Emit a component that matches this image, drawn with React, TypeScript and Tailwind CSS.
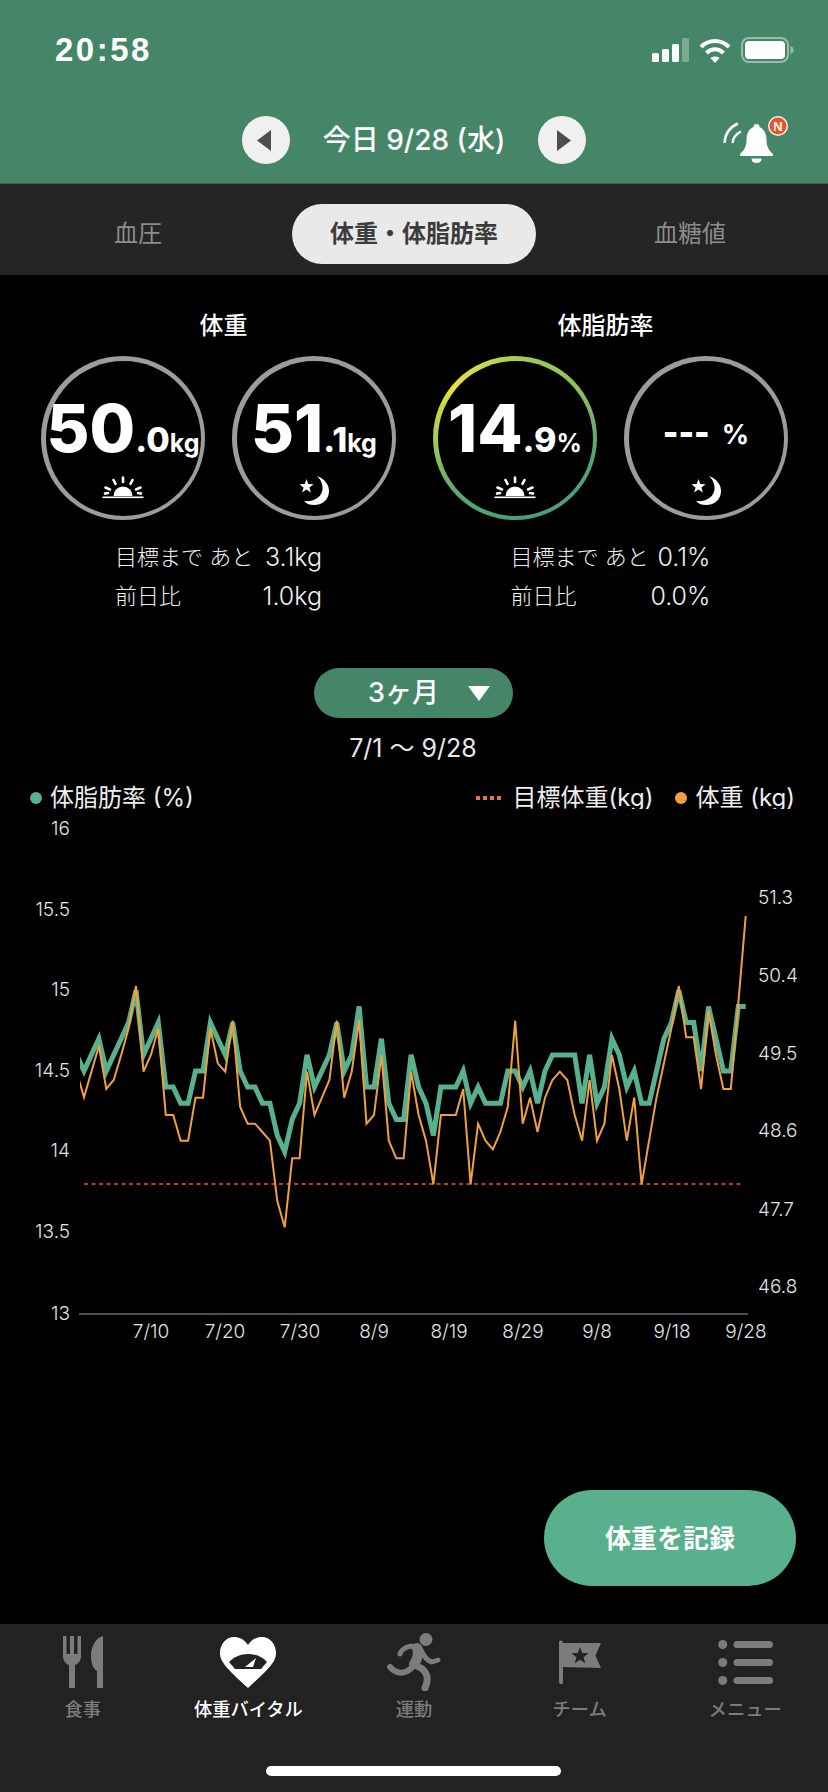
import React from "react";

const fat = [14.6,14.5,14.6,14.7,14.5,14.6,14.7,14.8,15.0,14.6,14.7,14.8,14.4,14.4,14.3,14.3,14.5,14.5,14.8,14.7,14.6,14.8,14.5,14.4,14.4,14.3,14.3,14.1,14.0,14.2,14.3,14.6,14.4,14.5,14.6,14.8,14.5,14.6,14.9,14.4,14.4,14.7,14.3,14.2,14.2,14.6,14.4,14.3,14.1,14.4,14.4,14.4,14.5,14.3,14.4,14.3,14.3,14.3,14.5,14.5,14.4,14.5,14.3,14.5,14.6,14.6,14.6,14.6,14.3,14.6,14.3,14.4,14.7,14.6,14.4,14.5,14.3,14.3,14.5,14.7,14.8,15.0,14.8,14.8,14.5,14.9,14.7,14.5,14.5,14.9,14.9];
const wz = [515,592,515,438,567,540,465,385,258,515,465,385,645,645,722,722,593,593,385,490,515,362,620,671,671,696,722,903,982,775,775,515,645,593,540,362,593,515,362,671,645,465,722,775,775,515,645,722,853,645,645,645,567,853,671,722,748,696,620,362,671,593,696,593,540,515,540,645,722,540,722,671,465,567,722,593,853,722,593,490,385,258,412,412,567,332,465,567,567,310,48];
const X = (i: number) => 84 + 7.435 * (i - 1);
const fatPts = fat.map((v, i) => `${X(i).toFixed(1)},${(1071 - (v - 14.5) * 161.3).toFixed(1)}`).join(" ");
const wPts = wz.map((z, i) => `${X(i).toFixed(1)},${(900 + z / 3).toFixed(1)}`).join(" ");

const leftTicks: [string, number][] = [["16",828],["15.5",909],["15",989],["14.5",1070],["14",1150],["13.5",1231],["13",1313]];
const rightTicks: [string, number][] = [["51.3",897],["50.4",975],["49.5",1053],["48.6",1130],["47.7",1209],["46.8",1286]];
const dates: [string, number][] = [["7/10",151],["7/20",225],["7/30",300],["8/9",374],["8/19",449],["8/29",523],["9/8",597],["9/18",672],["9/28",746]];

const FONT = "font-['Inter','Noto_Sans_CJK_JP',sans-serif]";

function Sun() {
  return (
    <svg width="42" height="24" viewBox="0 0 42 24" fill="white" className="mb-[6px]">
      <path d="M11.500 20a9.500 9.500 0 0 1 19 0z" />
      <rect x="0.500" y="20.500" width="41" height="1.600" />
      <g stroke="white" strokeWidth="2.600" strokeLinecap="round">
        <path d="M21 1.500v4.500M11.500 4l2 3.800M30.500 4l-2 3.800M3.500 11.500l4.500 2M38.500 11.500l-4.500 2M3 17.600l3-.6M39 17.600l-3-.6" />
      </g>
    </svg>
  );
}

function Moon() {
  return (
    <svg width="30" height="30" viewBox="0 0 30 30" fill="white">
      <path d="M18 0C26 3 30 9 30 15C30 23 24 29 15 29C11 29 8 28 5 25C14 26 22 22 23.500 14C24 8 22 4 18 0z" />
      <polygon points="7.500,3 9.300,8.100 14.600,8.200 10.400,11.400 11.900,16.600 7.500,13.500 3.100,16.600 4.600,11.400 0.400,8.200 5.700,8.100" />
    </svg>
  );
}

function Ring({ children, icon, gradient }: { children: React.ReactNode; icon: React.ReactNode; gradient?: boolean }) {
  return (
    <div className={`relative w-[164px] h-[164px] rounded-full shrink-0 ${gradient ? "bg-[conic-gradient(from_0deg,#a5cd52_0deg,#8fc25f_50deg,#52a276_105deg,#44a07c_180deg,#5fa96e_230deg,#a6cc52_270deg,#e6e23c_310deg,#c4d84a_340deg,#a5cd52_360deg)]" : "bg-[#9a9d9d]"}`}>
      <div className="absolute inset-[4.5px] rounded-full bg-black">
        <div className="absolute inset-x-0 top-[40px] h-[60px] flex items-end justify-center text-white whitespace-nowrap">
          {children}
        </div>
        <div className="absolute inset-x-0 bottom-[9.500px] h-[32px] flex items-end justify-center">{icon}</div>
      </div>
    </div>
  );
}

function Value({ a, b, u }: { a: string; b: string; u: string }) {
  return (
    <span className="font-['Inter',sans-serif] font-extrabold leading-none flex items-baseline">
      <span className="text-[66px] leading-none">{a}</span>
      <span className="text-[34px] leading-none">.{b}</span>
      <span className="text-[25px] leading-none font-bold">{u}</span>
    </span>
  );
}

function Stat({ rows, className }: { rows: [string, string][]; className: string }) {
  return (
    <div className={`flex flex-col gap-[9px] text-[#f0f0f0] text-[22px] font-light leading-[30px] ${className}`}>
      {rows.map(([l, v]) => (
        <div key={l} className="flex justify-between whitespace-nowrap">
          <span>{l}</span>
          <span className="text-[25px]">{v}</span>
        </div>
      ))}
    </div>
  );
}

function NavItem({ label, active, children }: { label: string; active?: boolean; children: React.ReactNode }) {
  return (
    <div className="w-[165.600px] flex flex-col items-center">
      <div className="h-[73px] pt-[3px] flex items-center justify-center">{children}</div>
      <div className={`text-[18.300px] leading-[24px] font-medium whitespace-nowrap ${active ? "text-white" : "text-[#7c7c7c]"}`}>{label}</div>
    </div>
  );
}

export default function App() {
  return (
    <div className={`w-[828px] h-[1792px] bg-black overflow-hidden flex flex-col ${FONT}`}>
      <header className="h-[184px] bg-[#448667] flex flex-col border-b border-[#555]">
        <div className="h-[100px] flex items-start justify-between pl-[55px] pr-[34px] pt-[30px]">
          <span className="text-white text-[33px] leading-[40px] font-bold font-['Liberation_Sans',sans-serif] tracking-[2.500px]">20:58</span>
          <div className="flex items-center gap-[10px] pt-[7px]">
            <svg width="37" height="24" viewBox="0 0 37 24" fill="white">
              <rect x="0" y="15" width="7" height="9" rx="1.500" />
              <rect x="10" y="11" width="7" height="13" rx="1.500" />
              <rect x="20" y="6" width="7" height="18" rx="1.500" />
              <rect x="30" y="0" width="7" height="24" rx="1.500" fillOpacity="0.3" />
            </svg>
            <svg width="32" height="25" viewBox="0 0 32 25" fill="none" stroke="white" strokeWidth="4">
              <path d="M2 9C10 1 22 1 30 9" />
              <path d="M7.500 15c5-5 12-5 17 0" />
              <path d="M16 25l-4.500-5c2.500-2 6.500-2 9 0z" fill="white" stroke="none" />
            </svg>
            <svg width="53" height="26" viewBox="0 0 53 26" fill="white">
              <rect x="1" y="1" width="46" height="24" rx="7" fill="none" stroke="white" strokeOpacity="0.45" strokeWidth="2" />
              <rect x="4" y="4" width="40" height="18" rx="4" />
              <path d="M49.500 9c2 .5 3 2.200 3 4s-1 3.500-3 4z" fillOpacity="0.45" />
            </svg>
          </div>
        </div>
        <div className="relative h-[48px] mt-[16px] flex items-center justify-center">
          <div className="w-[344px] flex items-center justify-between">
            <div className="w-[48px] h-[48px] rounded-full bg-[#f0f0f0] flex items-center justify-center pr-[4px]">
              <svg width="14" height="21" viewBox="0 0 14 21" fill="#4d4d4d"><path d="M14 0v21L0 10.500z" /></svg>
            </div>
            <span className="text-white text-[28px] font-medium leading-[32px] whitespace-nowrap">今日 9/28 (水)</span>
            <div className="w-[48px] h-[48px] rounded-full bg-[#f0f0f0] flex items-center justify-center pl-[4px]">
              <svg width="14" height="21" viewBox="0 0 14 21" fill="#4d4d4d"><path d="M0 0v21l14-10.500z" /></svg>
            </div>
          </div>
          <svg className="absolute left-[720px] top-[-2px]" width="72" height="52" viewBox="0 0 72 52">
            <path d="M18 9.500C10 13 5 20 4.500 29" fill="none" stroke="white" strokeWidth="2.500" />
            <path d="M21 17.500C16 20 13 24 12.500 29" fill="none" stroke="white" strokeWidth="2.500" />
            <path d="M36.500 10c2 0 3 1 3 3c5 2 7 7 7 13c0 6 2 10 6.500 14v2H20v-2c4.500-4 6.500-8 6.500-14c0-6 2-11 7-13c0-2 1-3 3-3z" fill="white" />
            <path d="M31.500 44.500h10c0 3-2 4.500-5 4.500s-5-1.500-5-4.500z" fill="white" />
            <circle cx="58" cy="12" r="10" fill="#f0f0f0" />
            <circle cx="58" cy="12" r="8.500" fill="#ee5024" />
            <text x="58" y="17" textAnchor="middle" fontSize="13" fontWeight="700" fill="white" fontFamily="Liberation Sans">N</text>
          </svg>
        </div>
      </header>

      <div className="h-[91px] bg-[#252525] flex items-start pt-[20px] text-[24px] leading-[60px]">
        <div className="w-[276px] text-center text-[#8c8c8c]">血圧</div>
        <div className="ml-[16px] w-[244px] h-[60px] rounded-[30px] bg-[#e9e9e9] text-[#3c3c3c] text-center font-bold">体重・体脂肪率</div>
        <div className="ml-[16px] w-[276px] text-center text-[#8c8c8c]">血糖値</div>
      </div>

      <section className="flex pt-[35px] pl-[41px]">
        <div className="w-[355px] flex flex-col items-center">
          <div className="text-white text-[24px] font-medium leading-[32px] ml-[10px]">体重</div>
          <div className="mt-[14px] w-full flex justify-between">
            <Ring icon={<Sun />}><Value a="50" b="0" u="kg" /></Ring>
            <Ring icon={<Moon />}><Value a="51" b="1" u="kg" /></Ring>
          </div>
          <Stat className="mt-[22px] w-[207px]" rows={[["目標まで あと", "3.1kg"], ["前日比", "1.0kg"]]} />
        </div>
        <div className="ml-[37px] w-[355px] flex flex-col items-center">
          <div className="text-white text-[24px] font-medium leading-[32px] mr-[10px]">体脂肪率</div>
          <div className="mt-[14px] w-full flex justify-between">
            <Ring gradient icon={<Sun />}><Value a="14" b="9" u="%" /></Ring>
            <Ring icon={<Moon />}>
              <span className="font-['Inter',sans-serif] font-bold leading-none pb-[12px] whitespace-nowrap flex items-baseline">
                <span className="text-[33px] font-black">---</span>
                <span className="ml-[12px] text-[27px]">%</span>
              </span>
            </Ring>
          </div>
          <Stat className="mt-[22px] w-[200px]" rows={[["目標まで あと", "0.1%"], ["前日比", "0.0%"]]} />
        </div>
      </section>

      <div className="mt-[57px] ml-[314px] w-[199px] h-[50px] rounded-[25px] bg-[#448667] flex items-center pl-[54px] gap-[29px] text-white text-[27px] font-medium">
        <span className="whitespace-nowrap">3ヶ月</span>
        <svg width="22" height="15" viewBox="0 0 22 15" fill="white"><path d="M0 0h22L11 15z" /></svg>
      </div>
      <div className="mt-[15px] text-center text-[#e8e8e8] text-[25px] leading-[30px] ml-[-2px]">7/1 〜 9/28</div>

      <div className="mt-[20px] flex items-start justify-between pl-[30px] pr-[33px] text-[#eeeeee] text-[24px] leading-[30px] h-[26px] overflow-hidden">
        <div className="flex items-start gap-[8px]">
          <span className="mt-[9px] w-[12px] h-[12px] rounded-full bg-[#58b08c]" />
          <span>体脂肪率 (%)</span>
        </div>
        <div className="flex items-start">
          <span className="flex gap-[3px] mr-[12px] mt-[13px]">
            <i className="w-[4px] h-[4px] bg-[#e8705a]" /><i className="w-[4px] h-[4px] bg-[#e8705a]" /><i className="w-[4px] h-[4px] bg-[#e8705a]" /><i className="w-[4px] h-[4px] bg-[#e8705a]" />
          </span>
          <span>目標体重(kg)</span>
          <span className="ml-[22px] mt-[9px] w-[12px] h-[12px] rounded-full bg-[#f0a040]" />
          <span className="ml-[8px]">体重 (kg)</span>
        </div>
      </div>

      <div className="relative flex-1">
        <svg className="absolute left-0 top-[-1px]" width="828" height="560" viewBox="0 808 828 560">
          <defs><clipPath id="plot"><rect x="80" y="808" width="680" height="520" /></clipPath></defs>
          <line x1="79" x2="748" y1="1314" y2="1314" stroke="#4f4f4f" strokeWidth="2" />
          <line x1="84" x2="744" y1="1184" y2="1184" stroke="#c23a1e" strokeWidth="2" strokeDasharray="4 3.500" />
          <g clipPath="url(#plot)" fill="none" strokeLinejoin="miter">
            <polyline points={fatPts} stroke="#58b08c" strokeWidth="5" />
            <polyline points={wPts} stroke="#f0a040" strokeWidth="2" />
          </g>
          <g fontFamily="Inter, sans-serif" fontSize="19" fontWeight="300" fill="#e4e4e4">
            {leftTicks.map(([t, y]) => (
              <text key={t} x="70" y={y + 7} textAnchor="end">{t}</text>
            ))}
            {rightTicks.map(([t, y]) => (
              <text key={t} x="758" y={y + 7}>{t}</text>
            ))}
            {dates.map(([t, x]) => (
              <text key={t} x={x} y="1338" textAnchor="middle">{t}</text>
            ))}
          </g>
        </svg>
        <div className="absolute right-[32px] top-[681px] w-[252px] h-[96px] rounded-[48px] bg-[#58b08c] flex items-center justify-center text-white text-[26px] font-bold">体重を記録</div>
      </div>

      <nav className="h-[168px] bg-[#222222] relative flex shrink-0">
        <NavItem label="食事">
          <svg width="40" height="52" viewBox="0 0 40 52" fill="#7c7c7c">
            <path d="M0 0h3.500v18h3.500V0h4v18h3.500V0H18v20c0 5-3 8-6 9v23H6V29c-3-1-6-4-6-9z" />
            <path d="M40 0V52h-6V35C30 33 28 27 28 20C28 10 33 2 40 0z" />
          </svg>
        </NavItem>
        <NavItem label="体重バイタル" active>
          <svg width="56" height="51" viewBox="0 0 56 51" fill="white">
            <path d="M28 8C24 2 19 0 14 0C6 0 0 7 0 16C0 24 5 30 28 51C51 30 56 24 56 16C56 7 50 0 42 0C37 0 32 2 28 8z" />
            <path d="M9 25C14 20 20 17 28 17C36 17 42 20 47 25L41 32H15z" fill="#222222" />
            <path d="M36 21L33 30H25z" fill="white" />
          </svg>
        </NavItem>
        <NavItem label="運動">
          <svg width="54" height="58" viewBox="0 0 54 58" fill="none" stroke="#7c7c7c" strokeLinecap="round" strokeLinejoin="round">
            <circle cx="39" cy="6.500" r="6.500" fill="#7c7c7c" stroke="none" />
            <path d="M30 14C22 12 15 15 13 21" strokeWidth="5" />
            <path d="M30 15C32 21 30 27 27 31" strokeWidth="10" />
            <path d="M33 15C36 22 40 28 45 29L51 27" strokeWidth="5" />
            <path d="M27 32C22 39 12 44 3 34" strokeWidth="6" />
            <path d="M27 32C37 35 44 42 38 55" strokeWidth="7" />
          </svg>
        </NavItem>
        <NavItem label="チーム">
          <svg width="42" height="45" viewBox="0 0 42 45" fill="#7c7c7c">
            <path d="M0 2C0 0 3 0 4 2.500V3H42L36.500 15.500L42 28L4 27V42C4 45 0 45 0 42z" />
            <polygon points="21,7 23.200,13 29.600,13.200 24.500,17.200 26.300,23.300 21,19.800 15.700,23.300 17.500,17.200 12.400,13.200 18.800,13" fill="#222222" />
          </svg>
        </NavItem>
        <NavItem label="メニュー">
          <svg width="55" height="45" viewBox="0 0 55 45" fill="#7c7c7c">
            <circle cx="4.700" cy="4.500" r="4.500" /><rect x="15.500" y="1" width="39.500" height="7" rx="3.500" />
            <circle cx="4.700" cy="22.500" r="4.500" /><rect x="15.500" y="19" width="39.500" height="7" rx="3.500" />
            <circle cx="4.700" cy="40.500" r="4.500" /><rect x="15.500" y="37" width="39.500" height="7" rx="3.500" />
          </svg>
        </NavItem>
        <div className="absolute left-[266px] top-[142px] w-[295px] h-[10px] rounded-full bg-white" />
      </nav>
    </div>
  );
}
